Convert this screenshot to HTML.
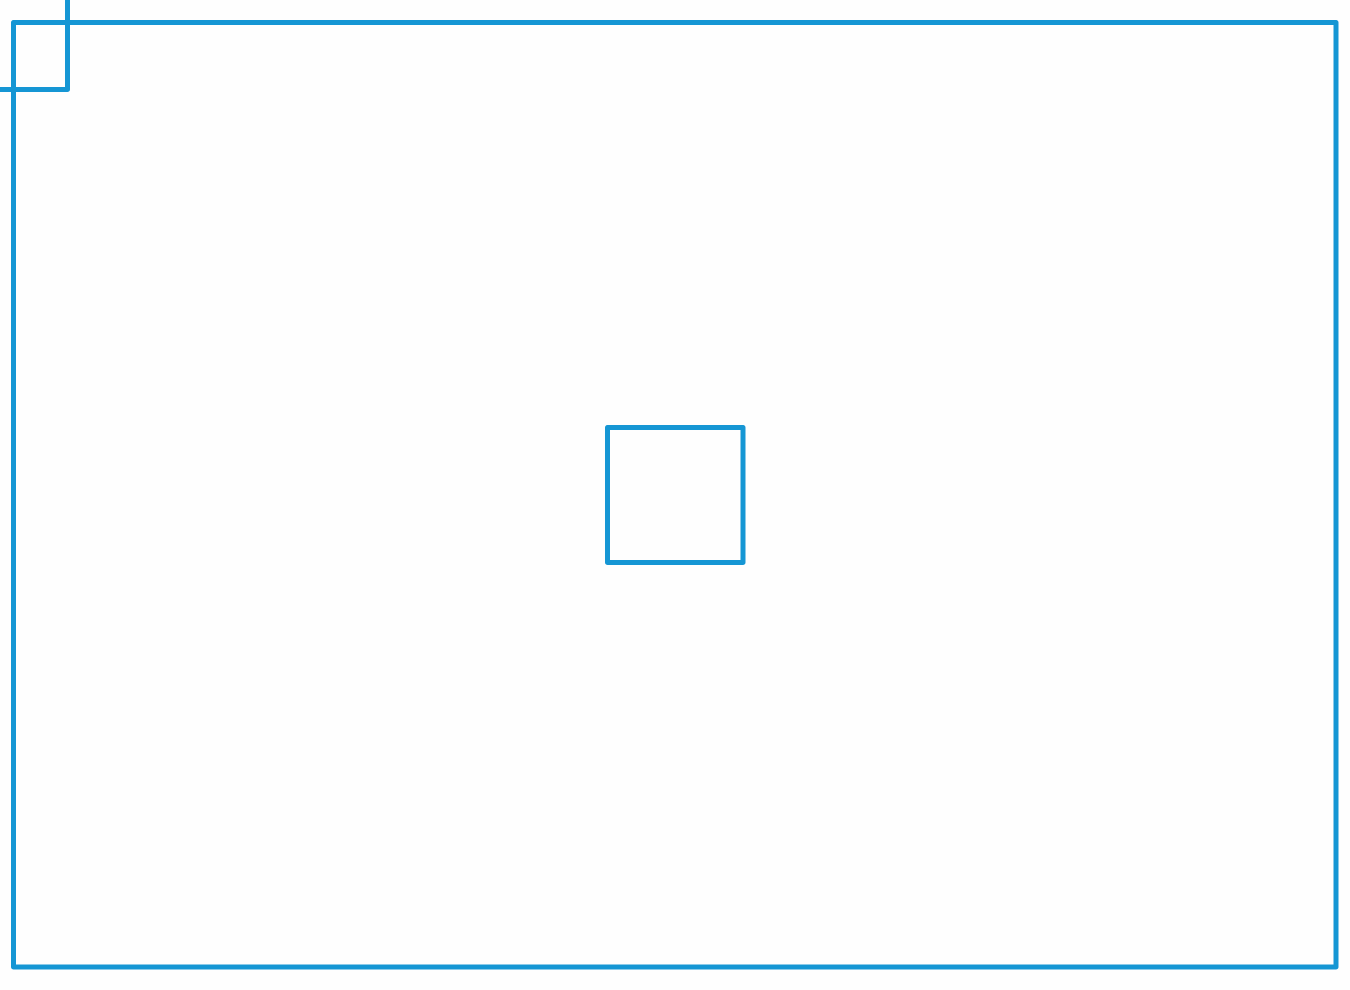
<!DOCTYPE html>
<html><head><style>html,body{margin:0;padding:0;background:#fefefe;}svg{display:block}</style></head>
<body>
<svg width="1350" height="990" viewBox="0 0 1350 990" xmlns="http://www.w3.org/2000/svg">
<g fill="none" stroke="#1596d4" stroke-width="5" stroke-linecap="round" stroke-linejoin="round">
<rect x="13.5" y="22.5" width="1322.5" height="944.5"/>
<path d="M67.5 -5 V89.5 H-5"/>
<rect x="607.5" y="427.5" width="135.5" height="135"/>
</g>
</svg>
</body></html>
